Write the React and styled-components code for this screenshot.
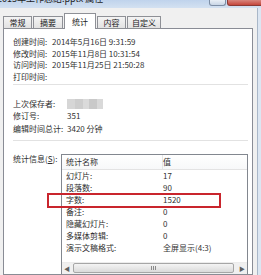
import React from "react";
import styled, { createGlobalStyle } from "styled-components";

const GlobalStyle = createGlobalStyle`
  html, body {
    margin: 0;
    padding: 0;
    background: #ffffff;
  }
  body {
    font-family: "Noto Sans CJK SC", "Noto Sans", sans-serif;
    color: #333;
  }
`;

const Window = styled.div`
  width: 261px;
  height: 275px;
  overflow: hidden;
  display: flex;
  flex-direction: column;
  background: #d5e2f1;
`;

const TitleBar = styled.div`
  height: 8px;
  flex-shrink: 0;
  display: flex;
  justify-content: space-between;
  align-items: flex-start;
  overflow: hidden;
  background: linear-gradient(#bfd3ec, #d3e1f1);
`;

const TitleText = styled.span`
  font-size: 9px;
  line-height: 10px;
  margin-top: -6px;
  margin-left: -3px;
  color: #1e1e1e;
  white-space: nowrap;
`;

const CaptionButtons = styled.div`
  display: flex;
  gap: 1px;
  margin-right: -2px;
`;

const CaptionButton = styled.div`
  width: ${(p) => p.w}px;
  height: 5px;
  border: 1px solid ${(p) => (p.close ? "#8b3a35" : "#7d8ea5")};
  border-top: none;
  border-radius: 0 0 3px 3px;
  background: ${(p) =>
    p.close
      ? "linear-gradient(#d8867e, #c5473d)"
      : "linear-gradient(#e9eff6, #c9d6e6)"};
`;

const Frame = styled.div`
  flex: 1;
  display: flex;
  min-height: 0;
`;

const Client = styled.div`
  flex: 1;
  display: flex;
  flex-direction: column;
  min-height: 0;
  background: #f0f0f0;
  padding: 5px 4px 0 3px;
  border-right: 1px solid #a9b7c8;
`;

const FrameEdge = styled.div`
  width: 3px;
  background: #dce6f2;
`;

const TabStrip = styled.div`
  display: flex;
  align-items: flex-end;
  gap: 1px;
  height: 16px;
  margin-bottom: -1px;
  flex-shrink: 0;
`;

const Tab = styled.div`
  box-sizing: border-box;
  width: ${(p) => p.w}px;
  height: ${(p) => (p.active ? 16 : 13)}px;
  border: 1px solid #8e9096;
  border-bottom: ${(p) => (p.active ? "none" : "1px solid #8e9096")};
  background: ${(p) =>
    p.active ? "#ffffff" : "linear-gradient(#f4f4f4, #e2e2e2)"};
  position: ${(p) => (p.active ? "relative" : "static")};
  z-index: ${(p) => (p.active ? 1 : 0)};
  display: flex;
  align-items: center;
  justify-content: center;
  font-size: 8px;
  line-height: 10px;
  color: #222;
`;

const Panel = styled.div`
  flex: 1;
  min-height: 0;
  background: #ffffff;
  border: 1px solid #898c95;
  padding: 7px 4px 0 9px;
  display: flex;
  flex-direction: column;
`;

const InfoRow = styled.div`
  display: flex;
  align-items: center;
  height: ${(p) => p.h}px;
  font-size: 8px;
  white-space: nowrap;
  flex-shrink: 0;
`;

const Label = styled.span`
  width: ${(p) => p.w}px;
  flex-shrink: 0;
  color: #2e2e2e;
`;

const Value = styled.span`
  color: #333;
`;

const Blurred = styled.span`
  width: 36px;
  height: 10px;
  background: linear-gradient(
    90deg,
    #d6d6d6 0 22%,
    #cdcdcd 22% 45%,
    #dadada 45% 62%,
    #c9c9c9 62% 82%,
    #d9d9d9 82%
  );
  filter: blur(0.6px);
`;

const Separator = styled.div`
  height: 1px;
  background: #e2e2e2;
  margin: ${(p) => p.m};
  flex-shrink: 0;
`;

const StatsSection = styled.div`
  display: flex;
  flex: 1;
  min-height: 0;
`;

const StatsLabel = styled.span`
  width: 48px;
  flex-shrink: 0;
  font-size: 8px;
  line-height: 10px;
  color: #2e2e2e;
  white-space: nowrap;
`;

const Underlined = styled.span`
  text-decoration: underline;
`;

const Table = styled.div`
  flex: 1;
  border: 1px solid #82878f;
  border-bottom: none;
  display: flex;
  flex-direction: column;
  background: #fff;
`;

const HeaderRow = styled.div`
  display: flex;
  height: 14px;
  align-items: center;
  border-bottom: 1px solid #e3e3e3;
  background: linear-gradient(#ffffff, #f7f8f9);
  font-size: 8px;
  flex-shrink: 0;
`;

const Row = styled.div`
  position: relative;
  display: flex;
  height: 12px;
  align-items: center;
  font-size: 8px;
  flex-shrink: 0;
`;

const NameCell = styled.span`
  box-sizing: border-box;
  width: 101px;
  padding-left: 4px;
  flex-shrink: 0;
  white-space: nowrap;
  color: #2e2e2e;
  border-right: ${(p) => (p.head ? "1px solid #e6e6e6" : "none")};
  height: 100%;
  display: flex;
  align-items: center;
`;

const ValueCell = styled.span`
  white-space: nowrap;
  color: #333;
`;

const Highlight = styled.div`
  position: absolute;
  left: -15px;
  top: -1px;
  width: 174px;
  height: 15px;
  box-sizing: border-box;
  border: 2px solid #c9252d;
`;

const ScrollBar = styled.div`
  display: flex;
  align-items: center;
  height: 11px;
  margin-top: 8px;
  background: #f0f0f0;
  border-top: 1px solid #ececec;
  flex-shrink: 0;
`;

const Arrow = styled.span`
  width: 10px;
  font-size: 6px;
  line-height: 11px;
  text-align: center;
  color: #606060;
  flex-shrink: 0;
`;

const Thumb = styled.div`
  flex: 1;
  height: 8px;
  margin: 0 3px 0 1px;
  border: 1px solid #a6a6a6;
  border-radius: 2px;
  background: linear-gradient(#f4f4f4, #dadada);
  display: flex;
  align-items: center;
  justify-content: center;
`;

const Grip = styled.span`
  width: 5px;
  height: 4px;
  background: repeating-linear-gradient(
    90deg,
    #8a8a8a 0 1px,
    transparent 1px 2px
  );
`;

const timeRows = [
  ["创建时间:", "2014年5月16日 9:31:59"],
  ["修改时间:", "2015年11月8日 10:31:54"],
  ["访问时间:", "2015年11月25日 21:50:28"],
  ["打印时间:", ""],
];

const stats = [
  ["幻灯片:", "17"],
  ["段落数:", "90"],
  ["字数:", "1520", true],
  ["备注:", "0"],
  ["隐藏幻灯片:", "0"],
  ["多媒体剪辑:", "0"],
  ["演示文稿格式:", "全屏显示(4:3)"],
];

const tabs = [
  ["常规", 29],
  ["摘要", 30],
  ["统计", 32, true],
  ["内容", 29],
  ["自定义", 34],
];

const App = () => {
  return (
    <>
      <GlobalStyle />
      <Window>
        <TitleBar>
          <TitleText>2015年工作总结.pptx 属性</TitleText>
          <CaptionButtons>
            <CaptionButton w={15} />
            <CaptionButton w={34} close />
          </CaptionButtons>
        </TitleBar>
        <Frame>
          <Client>
            <TabStrip>
              {tabs.map(([name, w, active]) => (
                <Tab key={name} w={w} active={active}>
                  {name}
                </Tab>
              ))}
            </TabStrip>
            <Panel>
              {timeRows.map(([label, value]) => (
                <InfoRow key={label} h={11.6}>
                  <Label w={39}>{label}</Label>
                  <Value>{value}</Value>
                </InfoRow>
              ))}
              <Separator m="2px 0 12px" />
              <InfoRow h={12.3}>
                <Label w={54}>上次保存者:</Label>
                <Blurred />
              </InfoRow>
              <InfoRow h={12.3}>
                <Label w={54}>修订号:</Label>
                <Value>351</Value>
              </InfoRow>
              <InfoRow h={12.3}>
                <Label w={54}>编辑时间总计:</Label>
                <Value>3420 分钟</Value>
              </InfoRow>
              <Separator m="5.5px 0 13px" />
              <StatsSection>
                <StatsLabel>
                  统计信息(<Underlined>S</Underlined>):
                </StatsLabel>
                <Table>
                  <HeaderRow>
                    <NameCell head>统计名称</NameCell>
                    <ValueCell>值</ValueCell>
                  </HeaderRow>
                  {stats.map(([name, value, marked]) => (
                    <Row key={name}>
                      <NameCell>{name}</NameCell>
                      <ValueCell>{value}</ValueCell>
                      {marked && <Highlight />}
                    </Row>
                  ))}
                  <ScrollBar>
                    <Arrow>◀</Arrow>
                    <Thumb>
                      <Grip />
                    </Thumb>
                    <Arrow>▶</Arrow>
                  </ScrollBar>
                </Table>
              </StatsSection>
            </Panel>
          </Client>
          <FrameEdge />
        </Frame>
      </Window>
    </>
  );
};

export default App;
